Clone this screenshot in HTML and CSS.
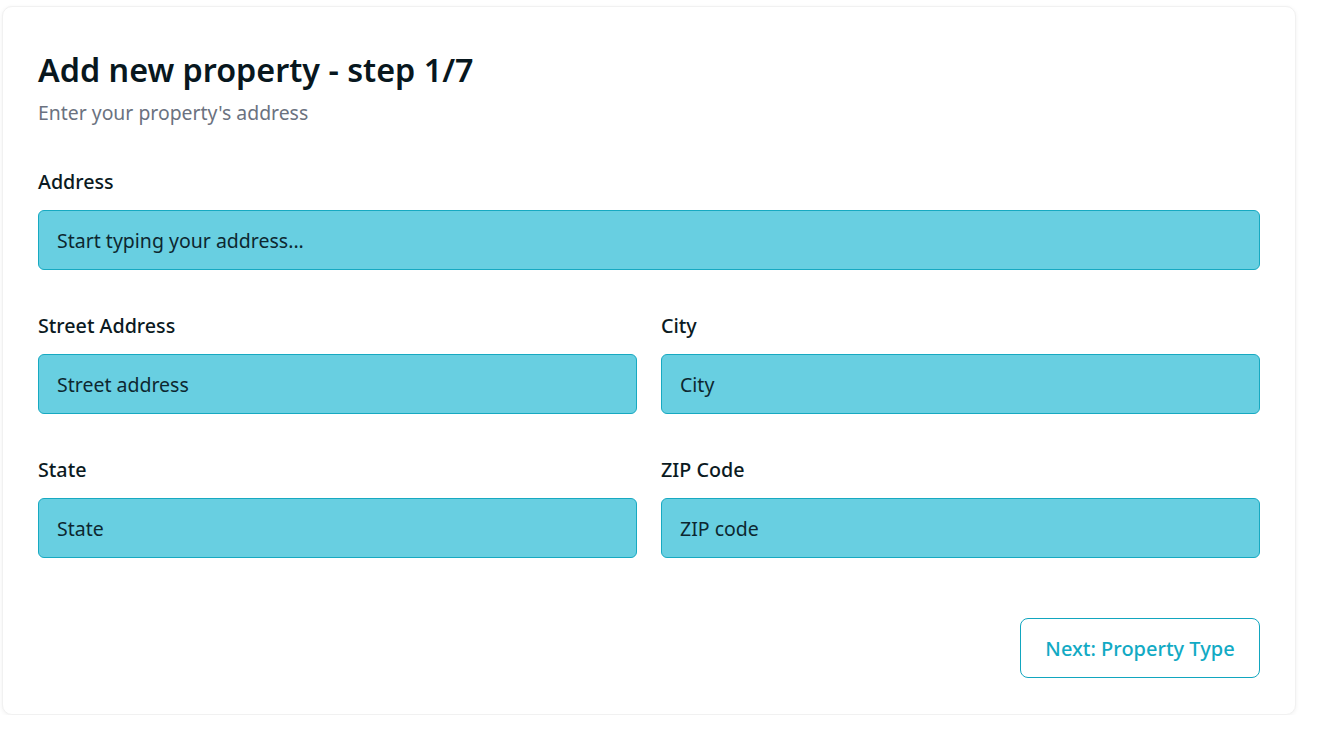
FILE: index.html
```html
<!DOCTYPE html>
<html lang="en">
<head>
<meta charset="utf-8">
<title>Add new property</title>
<link rel="stylesheet" href="styles.css">
</head>
<body>
<main class="card">
  <h1 class="title">Add new property - step 1/7</h1>
  <p class="subtitle">Enter your property's address</p>
  <form class="form">
    <div class="field field-full">
      <label class="label" for="address">Address</label>
      <input class="input" id="address" type="text" placeholder="Start typing your address...">
    </div>
    <div class="grid">
      <div class="field">
        <label class="label" for="street">Street Address</label>
        <input class="input" id="street" type="text" placeholder="Street address">
      </div>
      <div class="field">
        <label class="label" for="city">City</label>
        <input class="input" id="city" type="text" placeholder="City">
      </div>
      <div class="field">
        <label class="label" for="state">State</label>
        <input class="input" id="state" type="text" placeholder="State">
      </div>
      <div class="field">
        <label class="label" for="zip">ZIP Code</label>
        <input class="input" id="zip" type="text" placeholder="ZIP code">
      </div>
    </div>
    <div class="actions">
      <button class="btn-next" type="button">Next: Property Type</button>
    </div>
  </form>
</main>
</body>
</html>
```

FILE: styles.css
```css
html, body {
  margin: 0;
  padding: 0;
  background: #ffffff;
}
body {
  font-family: "Noto Sans", "Open Sans", sans-serif;
  color: #0b1a22;
}
.card {
  box-sizing: border-box;
  width: 1294px;
  margin: 6px 0 0 2px;
  padding: 42px 35px 36px 35px;
  background: #fff;
  border: 1px solid #f1f1f1;
  border-radius: 10px;
  box-shadow: 0 1px 4px rgba(0, 0, 0, 0.06);
}
.title {
  margin: 0;
  font-size: 32.3px;
  line-height: 40px;
  font-weight: 600;
  color: #08171e;
}
.subtitle {
  margin: 13px 0 0 0;
  font-size: 19.4px;
  line-height: 22px;
  color: #6b7280;
}
.form {
  margin-top: 46px;
  display: flex;
  flex-direction: column;
  gap: 44px;
}
.grid {
  display: grid;
  grid-template-columns: 1fr 1fr;
  column-gap: 24px;
  row-gap: 44px;
}
.field {
  display: flex;
  flex-direction: column;
  gap: 16px;
}
.label {
  font-size: 19.7px;
  line-height: 24px;
  font-weight: 500;
  color: #0b1a22;
}
.input {
  box-sizing: border-box;
  height: 60px;
  width: 100%;
  padding: 0 18px;
  font-family: inherit;
  font-size: 19.5px;
  color: #0b1a22;
  background: #68cfe1;
  border: 1px solid #17a9c1;
  border-radius: 6px;
  outline: none;
}
.input::placeholder {
  color: #0d2730;
  opacity: 1;
}
.actions {
  display: flex;
  justify-content: flex-end;
  margin-top: 16px;
}
.btn-next {
  box-sizing: border-box;
  width: 240px;
  height: 60px;
  font-family: inherit;
  font-size: 20px;
  font-weight: 500;
  color: #12aac4;
  background: #fff;
  border: 1px solid #12a6bf;
  border-radius: 8px;
  cursor: pointer;
}
```
